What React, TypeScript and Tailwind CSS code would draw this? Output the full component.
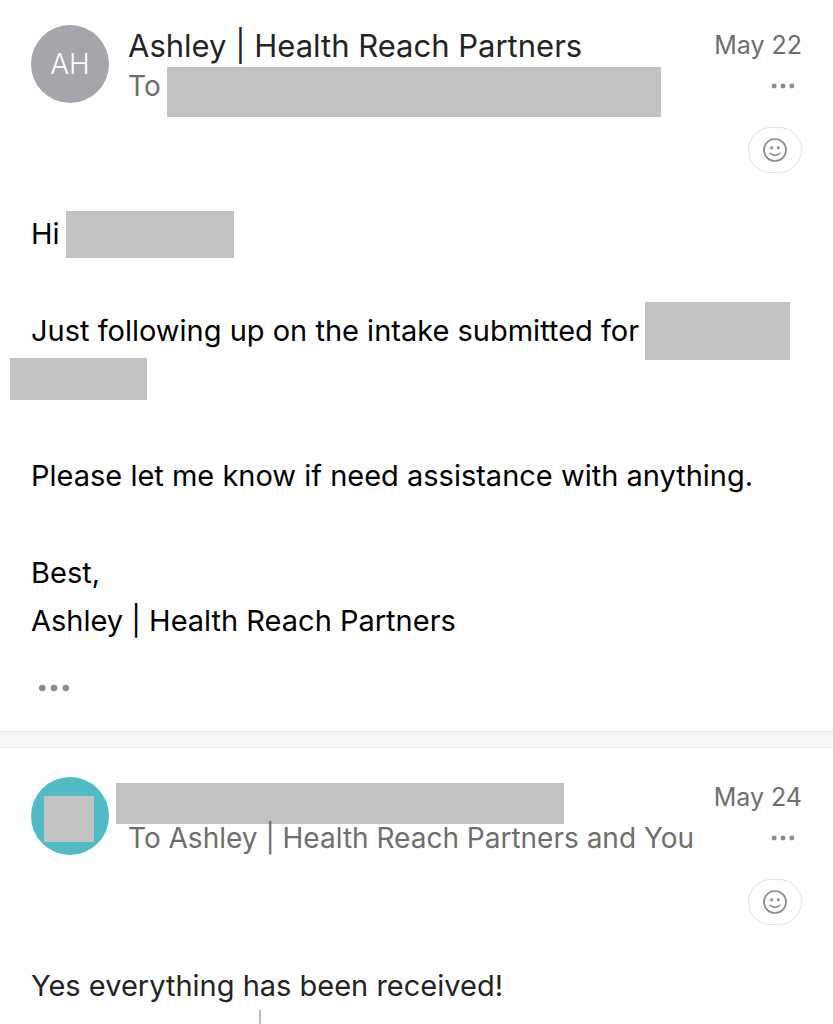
import React from 'react'
import clsx from 'clsx'

type MessageProps = {
  avatar: React.ReactNode
  avatarClass: string
  sender: React.ReactNode
  to: React.ReactNode
  date: string
  className?: string
  children: React.ReactNode
}

const Redacted = ({ className }: { className: string }) => (
  <span aria-hidden className={clsx('block shrink-0 bg-[#c2c2c2]', className)} />
)

const Dots = ({ className }: { className: string }) => (
  <svg viewBox="0 0 32 8" fill="currentColor" className={className} aria-hidden>
    <circle cx="4.2" cy="4" r="3.3" />
    <circle cx="16" cy="4" r="3.3" />
    <circle cx="27.8" cy="4" r="3.3" />
  </svg>
)

const Smiley = () => (
  <svg viewBox="0 0 24 24" fill="none" stroke="currentColor" strokeLinecap="round" className="size-6" aria-hidden>
    <circle cx="12" cy="12" r="11" strokeWidth="1.7" />
    <circle cx="8.6" cy="9.8" r="1.5" fill="currentColor" stroke="none" />
    <circle cx="15.4" cy="9.8" r="1.5" fill="currentColor" stroke="none" />
    <path d="M7.3 15.3c2.4 2.7 7 2.7 9.4 0" strokeWidth="1.7" />
  </svg>
)

function Message({ avatar, avatarClass, sender, to, date, className, children }: MessageProps) {
  return (
    <article className={clsx('px-[31px]', className)}>
      <header className="flex items-start gap-[19px]">
        <div className={clsx('flex size-[78px] shrink-0 items-center justify-center rounded-full text-[28px] font-light text-white', avatarClass)}>
          {avatar}
        </div>

        <div className="min-w-0 flex-1 whitespace-nowrap pt-[2px]">
          <div className="flex h-10 items-center pb-[2px] text-[31px] text-[#242424]">{sender}</div>
          <div className="flex h-10 items-start text-[28px] leading-[38px] text-[#6e6e6e]">{to}</div>
        </div>

        <div className="flex shrink-0 flex-col items-end">
          <time className="text-[25px] leading-10 text-[#6e6e6e]">{date}</time>
          <button type="button" aria-label="More actions" className="flex h-[42px] items-center pr-[6px] text-[#8c8c8c]">
            <Dots className="h-[6px] w-[26px]" />
          </button>
          <button
            type="button"
            aria-label="React"
            className="mt-5 flex h-[46px] w-[54px] items-center justify-center rounded-full border border-[#e0e0e0] text-[#8c8c8c]"
          >
            <Smiley />
          </button>
        </div>
      </header>

      <div className="mt-[37px] text-[29px] leading-[48px]">{children}</div>
    </article>
  )
}

export default function App() {
  return (
    <main className="min-h-screen overflow-hidden bg-white font-['Inter',sans-serif]">
      <Message
        className="pt-[25px]"
        avatar="AH"
        avatarClass="bg-[#a5a5ab]"
        sender={<h2>Ashley | Health Reach Partners</h2>}
        to={
          <>
            <span>To</span>
            <Redacted className="ml-[6px] h-[50px] w-[494px]" />
          </>
        }
        date="May 22"
      >
        <div className="flex flex-col gap-[49px] text-black">
          <div className="flex h-12 items-center gap-[6px]">
            Hi
            <Redacted className="h-[47px] w-[168px]" />
          </div>
          <div>
            <div className="flex h-12 items-center gap-[6px] whitespace-nowrap">
              Just following up on the intake submitted for
              <Redacted className="h-[58px] w-[145px]" />
            </div>
            <div className="-ml-[21px] flex h-12 items-center">
              <Redacted className="h-[42px] w-[137px]" />
            </div>
          </div>
          <p>Please let me know if need assistance with anything.</p>
          <p>
            Best,
            <br />
            Ashley | Health Reach Partners
          </p>
        </div>
        <button type="button" aria-label="Show quoted text" className="flex h-[86px] items-center px-[7px] text-[#8c8c8c]">
          <Dots className="h-2 w-8" />
        </button>
      </Message>

      <div className="h-[17px] border-y border-[#ededed] bg-[#f7f7f7]" />

      <Message
        className="pt-[29px]"
        avatar={<Redacted className="mt-[5px] -ml-[2px] h-[46px] w-[50px]" />}
        avatarClass="bg-[#50bac5]"
        sender={<Redacted className="mt-[10px] -ml-[12px] h-[41px] w-[448px]" />}
        to={<span>To Ashley | Health Reach Partners and You</span>}
        date="May 24"
      >
        <p className="text-[#242424]">Yes everything has been received!</p>
        <div className="ml-[228px] h-[14px] w-[2px] bg-[#bdbdbd]" />
      </Message>
    </main>
  )
}
